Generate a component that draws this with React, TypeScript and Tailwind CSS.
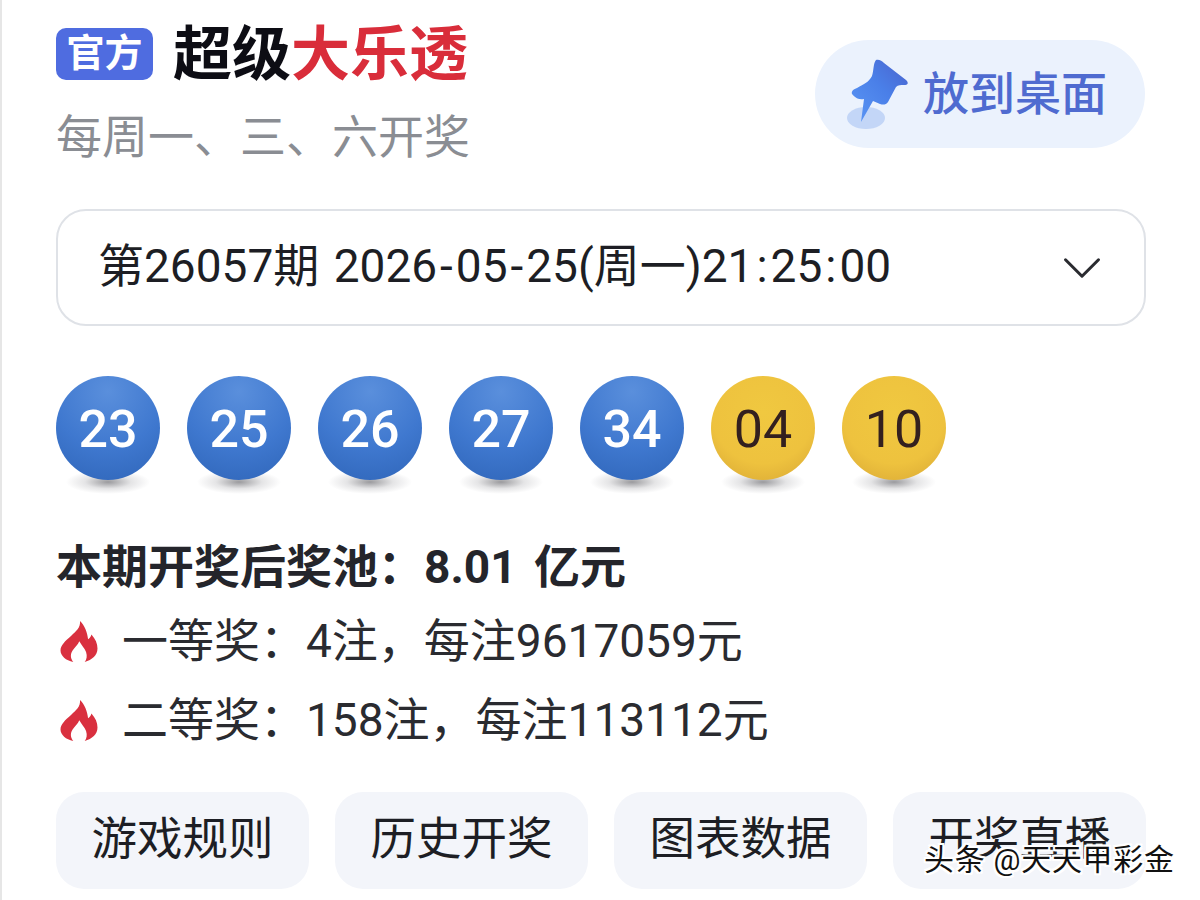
import React from 'react';
import { ChevronDown } from 'lucide-react';

const cjk = "font-['Roboto','Noto_Sans_CJK_SC',sans-serif]";

const Ball: React.FC<{ value: string; gold?: boolean }> = ({ value, gold }) => (
  <div className="relative w-[104px] h-[104px] shrink-0">
    <div className="absolute left-[10px] bottom-[-14px] w-[84px] h-[24px] rounded-[50%] bg-[radial-gradient(closest-side,rgba(100,100,105,0.65)_0%,rgba(150,150,155,0.25)_55%,rgba(255,255,255,0)_100%)]" />
    <div
      className={`relative w-full h-full rounded-full flex items-center justify-center pt-[4px] text-[52px] leading-none ${
        gold
          ? 'font-normal bg-[radial-gradient(circle_at_50%_35%,#f0c840_0%,#eec23e_60%,#d6a534_100%)] text-[#33201f]'
          : 'font-medium bg-[radial-gradient(circle_at_50%_15%,#5a8fdc_0%,#3f78cf_55%,#2f65b8_100%)] text-white'
      }`}
    >
      {value}
    </div>
  </div>
);

const Flame = () => (
  <svg width="38" height="41" viewBox="0 0 110 122" className="shrink-0 ml-[4px]">
    <path
      fill="#d9303f"
      d="M58 0C60 20 46 30 32 44C14 60 0 72 0 88C0 104 16 118 38 122C30 112 28 100 36 88C42 78 52 70 56 60C62 72 72 80 76 92C80 104 78 114 72 122C94 116 110 102 110 82C110 66 104 54 92 40C90 48 86 52 82 54C80 34 72 14 58 0Z"
    />
  </svg>
);

const Pin = () => (
  <svg width="64" height="72" viewBox="0 0 64 72" className="shrink-0">
    <defs>
      <linearGradient id="pinFill" x1="0" y1="1" x2="1" y2="0">
        <stop offset="0" stopColor="#5b97f5" />
        <stop offset="0.55" stopColor="#4a7fe8" />
        <stop offset="1" stopColor="#4a62cc" />
      </linearGradient>
    </defs>
    <ellipse cx="20" cy="60" rx="19" ry="11" fill="#c3d6f7" />
    <path
      d="M30 2C33 1 36 3 38 5L60 22C63 25 62 27 58 27C55 27 52 27 50 29L42 44C40 47 37 47 34 46L27 43L15 64L18 41C11 42 9 39 6 36C5 33 8 31 11 30C18 26 23 24 26 18C28 12 27 6 30 2Z"
      fill="url(#pinFill)"
    />
  </svg>
);

const links = ['游戏规则', '历史开奖', '图表数据', '开奖直播'];

export default function App() {
  return (
    <div className={`relative w-[1200px] h-[900px] overflow-hidden bg-white border-l-2 border-[#e6e6e6] ${cjk}`}>
      <div className="pl-[54px] pr-[54px]">
        {/* Header */}
        <div className="flex justify-between items-start pt-[18px]">
          <div>
            <div className="flex items-center h-[72px]">
              <span className="w-[97px] h-[52px] rounded-[10px] bg-[#4f6ce0] text-white text-[38px] font-bold leading-[50px] text-center">
                官方
              </span>
              <h1 className="ml-[20px] text-[59px] font-bold leading-none text-[#0d0d14]">
                超级<span className="text-[#d92d3a]">大乐透</span>
              </h1>
            </div>
            <p className="mt-[20px] text-[46px] leading-[54px] text-[#8a8d93]">每周一、三、六开奖</p>
          </div>
          <div className="mt-[22px] mr-[1px] w-[330px] h-[108px] rounded-[54px] bg-[#ebf2fd] flex items-center pl-[31px] gap-[13px]">
            <Pin />
            <span className="text-[46px] font-medium text-[#4f6bd0] leading-none">放到桌面</span>
          </div>
        </div>

        {/* Draw selector */}
        <div className="mt-[45px] h-[117px] rounded-[30px] border-2 border-[#dfe2e7] flex items-center justify-between pl-[40px] pr-[29px]">
          <span className="pb-[4px] text-[46px] leading-none text-[#1d1e24] [word-spacing:3px]">
            第26057期 2026<span className="mx-[3px]">-</span>05<span className="mx-[3px]">-</span>25(周一)21
            <span className="mx-[3px]">:</span>25<span className="mx-[3px]">:</span>00
          </span>
          <ChevronDown size={66} strokeWidth={1.1} className="text-[#2a2b30]" />
        </div>

        {/* Balls */}
        <div className="mt-[50px] flex gap-[27px]">
          {['23', '25', '26', '27', '34'].map((n) => (
            <Ball key={n} value={n} />
          ))}
          {['04', '10'].map((n) => (
            <Ball key={n} value={n} gold />
          ))}
        </div>

        {/* Prizes */}
        <p className="mt-[57px] text-[46px] font-bold leading-[60px] text-[#24252b] [word-spacing:6px]">本期开奖后奖池：8.01 亿元</p>
        <div className="mt-[12px] flex items-center gap-[24px] h-[64px] text-[46px] text-[#2a2b30]">
          <Flame />
          <span>一等奖：4注，每注9617059元</span>
        </div>
        <div className="mt-[15px] flex items-center gap-[24px] h-[64px] text-[46px] text-[#2a2b30]">
          <Flame />
          <span>二等奖：158注，每注113112元</span>
        </div>

        {/* Links */}
        <div className="mt-[40px] grid grid-cols-4 gap-[26px]">
          {links.map((l) => (
            <div key={l} className="h-[97px] rounded-[28px] bg-[#f3f5fa] flex items-center justify-center text-[45.5px] text-[#1d1e24]">
              {l}
            </div>
          ))}
        </div>
      </div>

      {/* Watermark */}
      <span className="absolute left-[922px] top-[843px] text-[30px] leading-[34px] tracking-[0.7px] text-[#111] [text-shadow:2px_2px_0_#fff,-2px_-2px_0_#fff,2px_-2px_0_#fff,-2px_2px_0_#fff,0_2px_0_#fff,0_-2px_0_#fff,2px_0_0_#fff,-2px_0_0_#fff]">
        头条 @天天甲彩金
      </span>
    </div>
  );
}
